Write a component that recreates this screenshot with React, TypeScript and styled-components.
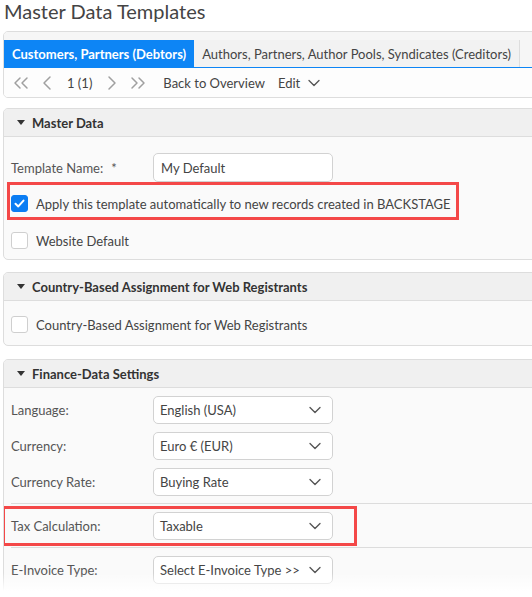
import React from 'react';
import styled, { createGlobalStyle } from 'styled-components';
import {
  ChevronDown,
  ChevronLeft,
  ChevronRight,
  ChevronsLeft,
  ChevronsRight,
} from 'lucide-react';

const GlobalStyle = createGlobalStyle`
  html, body {
    margin: 0;
    padding: 0;
    background: #fff;
  }
  body {
    font-family: Lato, "Open Sans", sans-serif;
    font-size: 13px;
    color: #444;
  }
  * {
    box-sizing: border-box;
  }
`;

const BLUE = '#0d85f5';
const RED = '#f44848';

const Page = styled.div`
  position: relative;
  width: 532px;
  height: 597px;
  overflow: hidden;
  background: #fff;
`;

const Content = styled.div`
  width: 600px;
  padding-left: 3px;
  display: flex;
  flex-direction: column;
`;

const Title = styled.h1`
  margin: 0;
  padding-left: 1px;
  height: 31px;
  font-size: 20px;
  line-height: 23px;
  font-weight: 400;
  color: #444;
`;

const TabBox = styled.div`
  border: 1px solid #ddd;
  border-radius: 5px;
  background: #fff;
  overflow: hidden;
`;

const TabStrip = styled.div`
  display: flex;
  padding-top: 8px;
  background: #f6f6f6;
  border-bottom: 1px solid ${BLUE};
`;

const Tab = styled.div<{ $active?: boolean }>`
  height: 27px;
  display: flex;
  align-items: center;
  padding: 0 8px;
  background: ${(p) => (p.$active ? BLUE : '#f2f2f2')};
  color: ${(p) => (p.$active ? '#fff' : '#444')};
  font-weight: ${(p) => (p.$active ? 700 : 400)};
  border-right: ${(p) => (p.$active ? 'none' : '1px solid #ddd')};
  white-space: nowrap;
`;

const Toolbar = styled.div`
  height: 29px;
  display: flex;
  align-items: center;
  padding-left: 5px;
  background: #fdfdfd;
`;

const NavIcon = styled.span<{ $space: number }>`
  display: flex;
  color: #a0a0a0;
  margin-right: ${(p) => p.$space}px;
`;

const ToolText = styled.span<{ $space: number }>`
  color: #444;
  margin-right: ${(p) => p.$space}px;
  white-space: nowrap;
`;

const ToolChevron = styled.span`
  display: flex;
  color: #555;
`;

const Panel = styled.section<{ $gap: number }>`
  margin-top: ${(p) => p.$gap}px;
  border: 1px solid #ddd;
  border-radius: 5px;
  background: #fafafa;
  overflow: hidden;
`;

const PanelHeader = styled.div`
  height: 28px;
  display: flex;
  align-items: center;
  padding-left: 13px;
  background: #f0f0f0;
  border-bottom: 1px solid #ddd;
  font-weight: 700;
  color: #333;
  white-space: nowrap;
`;

const Caret = styled.span`
  width: 0;
  height: 0;
  margin-right: 7px;
  border-left: 4px solid transparent;
  border-right: 4px solid transparent;
  border-top: 5px solid #333;
`;

const PanelBody = styled.div<{ $top: number; $bottom: number }>`
  padding: ${(p) => p.$top}px 7px ${(p) => p.$bottom}px;
  display: flex;
  flex-direction: column;
`;

const FieldRow = styled.div<{ $gap?: number; $inset?: boolean }>`
  display: grid;
  grid-template-columns: 142px 180px;
  align-items: center;
  margin-top: ${(p) => p.$gap ?? 0}px;
  padding: ${(p) => (p.$inset ? '3px 0 3px 6px' : '0')};
`;

const Label = styled.span`
  color: #555;
  white-space: nowrap;
`;

const Star = styled.span`
  margin-left: 8px;
`;

const TextInput = styled.div`
  height: 29px;
  display: flex;
  align-items: center;
  padding: 0 7px;
  background: #fff;
  border: 1px solid #d2d2d2;
  border-radius: 5px;
  color: #444;
`;

const Select = styled.div`
  height: 28px;
  display: flex;
  align-items: center;
  justify-content: space-between;
  padding: 0 7px 0 6px;
  background: #fff;
  border: 1px solid #d2d2d2;
  border-radius: 5px;
  color: #444;
  white-space: nowrap;
`;

const Highlight = styled.div<{ $left: number; $width: number }>`
  margin-left: -${(p) => p.$left}px;
  width: ${(p) => p.$width}px;
  border: 3px solid ${RED};
`;

const CheckRow = styled.label<{ $gap?: number; $inset?: boolean }>`
  display: flex;
  align-items: center;
  gap: 8px;
  margin-top: ${(p) => p.$gap ?? 0}px;
  padding: ${(p) => (p.$inset ? '10px 0 5px 1px' : '0')};
  color: #444;
  white-space: nowrap;
`;

const Box = styled.span<{ $checked?: boolean }>`
  width: 17px;
  height: 17px;
  flex: none;
  display: flex;
  align-items: center;
  justify-content: center;
  border-radius: 3px;
  background: ${(p) => (p.$checked ? '#0b7df3' : '#fff')};
  border: 1px solid ${(p) => (p.$checked ? '#0b7df3' : '#cfcfcf')};
`;

const Divider = styled.div<{ $top: number; $bottom: number }>`
  height: 1px;
  background: #dcdcdc;
  margin: ${(p) => p.$top}px -20px ${(p) => p.$bottom}px 0;
`;

const Fade = styled.div`
  position: absolute;
  left: 0;
  right: 0;
  bottom: 0;
  height: 24px;
  background: linear-gradient(rgba(255, 255, 255, 0), #fff 75%);
  pointer-events: none;
`;

function Checkbox({ checked }: { checked?: boolean }) {
  return (
    <Box $checked={checked}>
      {checked && (
        <svg width="13" height="13" viewBox="0 0 13 13">
          <polyline
            points="2.5,6.8 5.3,9.4 10.5,3.6"
            fill="none"
            stroke="#fff"
            strokeWidth="2"
            strokeLinecap="round"
            strokeLinejoin="round"
          />
        </svg>
      )}
    </Box>
  );
}

function Dropdown({ value }: { value: string }) {
  return (
    <Select>
      {value}
      <ChevronDown size={20} strokeWidth={1.6} color="#555" />
    </Select>
  );
}

export default function App() {
  return (
    <Page>
      <GlobalStyle />
      <Content>
        <Title>Master Data Templates</Title>

        <TabBox>
          <TabStrip>
            <Tab $active>Customers, Partners (Debtors)</Tab>
            <Tab>Authors, Partners, Author Pools, Syndicates (Creditors)</Tab>
          </TabStrip>
          <Toolbar>
            <NavIcon $space={2}>
              <ChevronsLeft size={24} strokeWidth={1.5} />
            </NavIcon>
            <NavIcon $space={8}>
              <ChevronLeft size={24} strokeWidth={1.5} />
            </NavIcon>
            <ToolText $space={8}>1 (1)</ToolText>
            <NavIcon $space={2}>
              <ChevronRight size={24} strokeWidth={1.5} />
            </NavIcon>
            <NavIcon $space={13}>
              <ChevronsRight size={24} strokeWidth={1.5} />
            </NavIcon>
            <ToolText $space={13}>Back to Overview</ToolText>
            <ToolText $space={4}>Edit</ToolText>
            <ToolChevron>
              <ChevronDown size={20} strokeWidth={1.6} />
            </ToolChevron>
          </Toolbar>
        </TabBox>

        <Panel $gap={10}>
          <PanelHeader>
            <Caret />
            Master Data
          </PanelHeader>
          <PanelBody $top={16} $bottom={10}>
            <FieldRow>
              <Label>
                Template Name:<Star>*</Star>
              </Label>
              <TextInput>My Default</TextInput>
            </FieldRow>
            <Highlight $left={4} $width={452}>
              <CheckRow $inset>
                <Checkbox checked />
                Apply this template automatically to new records created in BACKSTAGE
              </CheckRow>
            </Highlight>
            <CheckRow $gap={12}>
              <Checkbox />
              Website Default
            </CheckRow>
          </PanelBody>
        </Panel>

        <Panel $gap={12}>
          <PanelHeader>
            <Caret />
            Country-Based Assignment for Web Registrants
          </PanelHeader>
          <PanelBody $top={15} $bottom={12}>
            <CheckRow>
              <Checkbox />
              Country-Based Assignment for Web Registrants
            </CheckRow>
          </PanelBody>
        </Panel>

        <Panel $gap={13}>
          <PanelHeader>
            <Caret />
            Finance-Data Settings
          </PanelHeader>
          <PanelBody $top={8} $bottom={20}>
            <FieldRow>
              <Label>Language:</Label>
              <Dropdown value="English (USA)" />
            </FieldRow>
            <FieldRow $gap={8}>
              <Label>Currency:</Label>
              <Dropdown value="Euro € (EUR)" />
            </FieldRow>
            <FieldRow $gap={8}>
              <Label>Currency Rate:</Label>
              <Dropdown value="Buying Rate" />
            </FieldRow>
            <Divider $top={7} $bottom={2} />
            <Highlight $left={9} $width={355}>
              <FieldRow $inset>
                <Label>Tax Calculation:</Label>
                <Dropdown value="Taxable" />
              </FieldRow>
            </Highlight>
            <Divider $top={1} $bottom={8} />
            <FieldRow>
              <Label>E-Invoice Type:</Label>
              <Dropdown value="Select E-Invoice Type >>" />
            </FieldRow>
          </PanelBody>
        </Panel>
      </Content>
      <Fade />
    </Page>
  );
}
